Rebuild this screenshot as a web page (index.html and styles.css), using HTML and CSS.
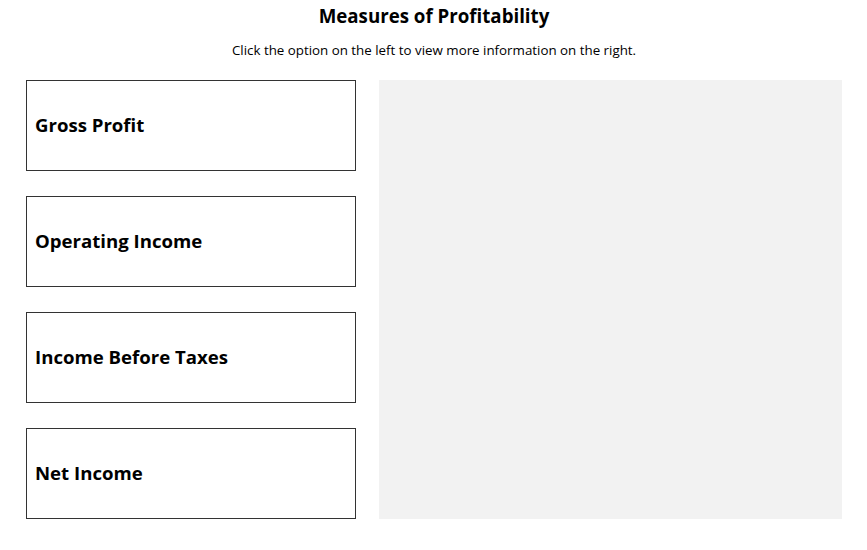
FILE: index.html
```html
<!DOCTYPE html>
<html>
<head>
<meta charset="utf-8">
<link rel="stylesheet" href="styles.css">
</head>
<body>
<div class="page">
  <h1 class="title">Measures of Profitability</h1>
  <p class="subtitle">Click the option on the left to view more information on the right.</p>
  <div class="main">
    <div class="options">
      <div class="option">Gross Profit</div>
      <div class="option">Operating Income</div>
      <div class="option">Income Before Taxes</div>
      <div class="option">Net Income</div>
    </div>
    <div class="panel"></div>
  </div>
</div>
</body>
</html>
```
FILE: styles.css
```css
html, body {
  margin: 0;
  padding: 0;
  background: #fff;
}
body {
  font-family: "Open Sans", "Liberation Sans", sans-serif;
  color: #000;
}
.page {
  padding: 0 25px 0 26px;
}
.title {
  margin: 0;
  padding-top: 3px;
  font-size: 18.7px;
  line-height: 26px;
  font-weight: 700;
  text-align: center;
}
.subtitle {
  margin: 12px 0 0;
  font-size: 13.33px;
  line-height: 19px;
  text-align: center;
}
.main {
  display: flex;
  gap: 23px;
  margin-top: 20px;
}
.options {
  width: 330px;
  display: flex;
  flex-direction: column;
  gap: 25px;
}
.option {
  box-sizing: border-box;
  height: 91px;
  border: 1px solid #333;
  display: flex;
  align-items: center;
  padding: 0 0 2px 8px;
  font-size: 18.6px;
  font-weight: 700;
}
.panel {
  flex: 1;
  height: 439px;
  background: #f2f2f2;
}
```
